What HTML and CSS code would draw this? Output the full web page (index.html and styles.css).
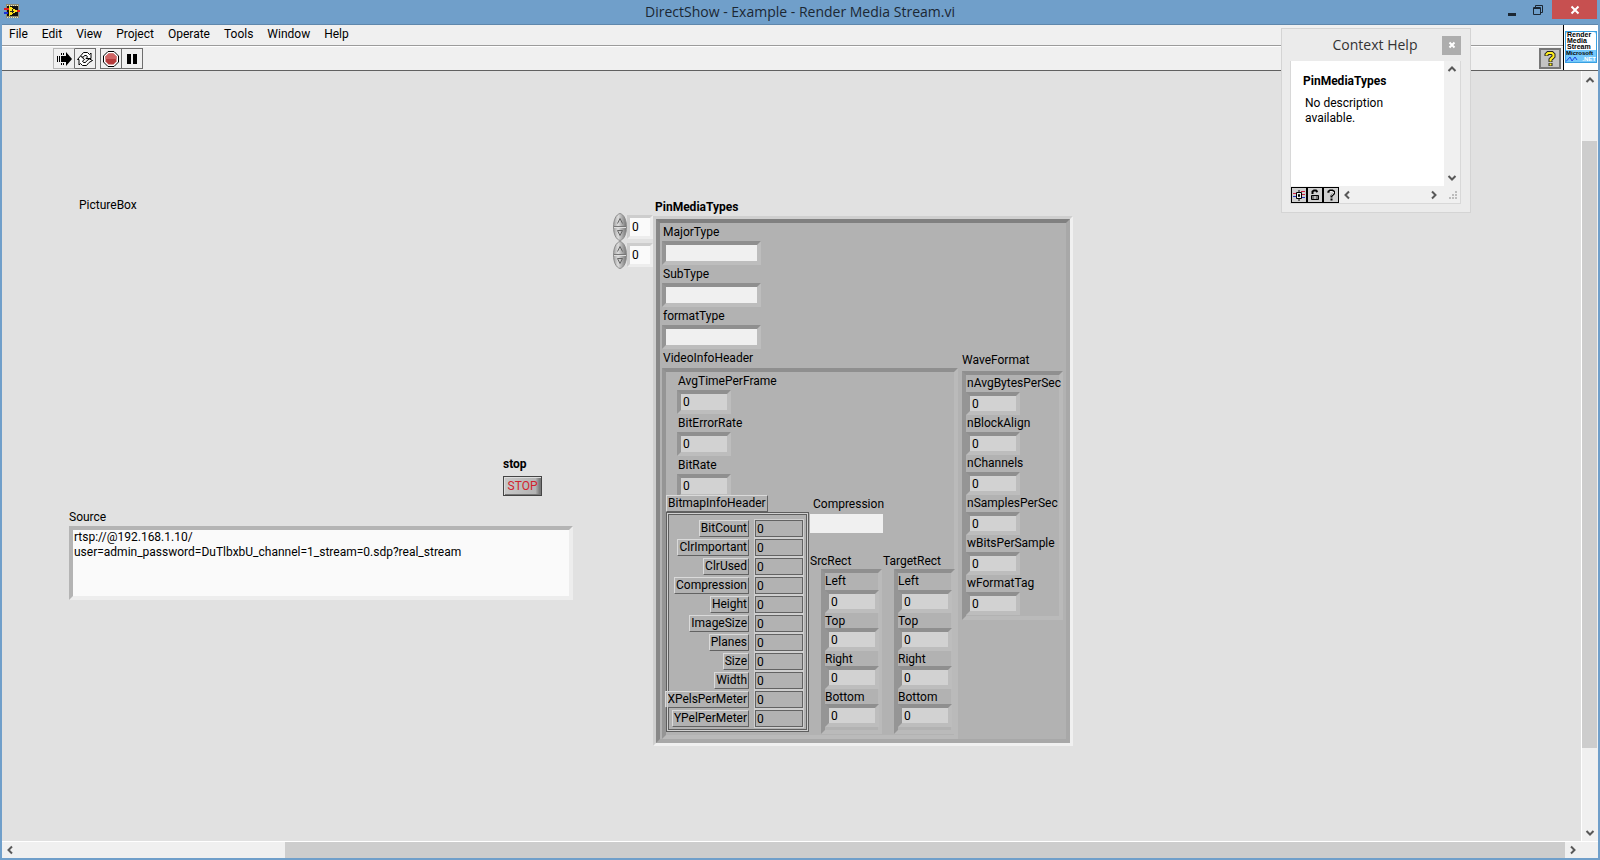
FILE: index.html
```html
<!DOCTYPE html>
<html lang="en">
<head>
<meta charset="utf-8">
<title>DirectShow - Example - Render Media Stream.vi</title>
<link rel="stylesheet" href="styles.css">
</head>
<body>
<div class="window">
  <header class="titlebar">
    <svg class="app-icon" viewBox="0 0 16 16" width="16" height="16" shape-rendering="crispEdges">
      <rect x="2" y="1" width="13" height="14" fill="#8d8a70"/>
      <path d="M3 2h11M3 14h11" stroke="#e8e4c0" stroke-dasharray="1 1"/>
      <rect x="3" y="3" width="11" height="10" fill="#111"/>
      <path d="M5 3l9 5-9 5z" fill="#ffe11c"/>
      <path d="M6 8h4M8 6v4" stroke="#222"/>
      <path d="M0 6h5M13 8h3" stroke="#e02020" stroke-width="2"/>
      <path d="M0 10h4" stroke="#1c30d8" stroke-width="2"/>
    </svg>
    <h1 class="title">DirectShow - Example - Render Media Stream.vi</h1>
    <div class="caption-buttons">
      <button class="caption" aria-label="Minimize"><svg viewBox="0 0 12 12" width="12" height="12"><path d="M2 10.500h8" stroke="#1b2733" stroke-width="3"/></svg></button>
      <button class="caption" aria-label="Restore"><svg viewBox="0 0 12 12" width="12" height="12"><path d="M3.5 3V1.5h7v7H9" fill="none" stroke="#1b2733"/><path d="M1.5 3.5h7v7h-7zM1 4.500h8" fill="none" stroke="#1b2733"/></svg></button>
      <button class="caption close" aria-label="Close"><svg viewBox="0 0 10 10" width="10" height="10"><path d="M1.500 1.500l7 7M8.500 1.500l-7 7" stroke="#fff" stroke-width="2"/></svg></button>
    </div>
  </header>

  <div class="client">
    <div class="bars">
      <div class="bar-rows">
        <nav class="menubar">
          <button>File</button><button>Edit</button><button>View</button><button>Project</button><button>Operate</button><button>Tools</button><button>Window</button><button>Help</button>
        </nav>
        <div class="toolbar">
          <div class="tool-group">
            <button class="tool soft" aria-label="Run"><svg viewBox="0 0 16 14" width="16" height="14"><path d="M6 4h4V0l6 7-6 7v-4H6z" fill="#000"/><path d="M1.500 4v6M3.500 4v6M5.500 4v6M5.500 1v2M7.500 1v2M5.500 11v2M7.500 11v2" stroke="#000"/></svg></button>
            <button class="tool" aria-label="Run continuously"><svg viewBox="0 0 16 14" width="16" height="14"><path d="M4 3.500L6.500.5h4l2 2L14 1v5.500H9L10.500 5l-1-1.500h-2L6 5.500zM12 10.500l-2.500 3h-4l-2-2L2 13V7.500h-1.500L3.500 4l4 3.500L5.500 9l1 1.500h2L10 8.500l2.500-1.500 3 1.500z" fill="#fff" stroke="#000"/></svg></button>
          </div>
          <div class="tool-group">
            <button class="tool" aria-label="Abort"><svg viewBox="0 0 16 16" width="16" height="16"><path d="M5 .5h6L15.500 5v6L11 15.500H5L.5 11V5z" fill="#fff" stroke="#000"/><path d="M5.500 2.500h5l3 3v5l-3 3h-5l-3-3v-5z" fill="#b53a3a"/><path d="M5.500 2.500h5l3 3V8h-11V5.500z" fill="#cf6464"/></svg></button>
            <button class="tool" aria-label="Pause"><svg viewBox="0 0 10 10" width="10" height="10"><path d="M0 0h4v10H0zM6 0h4v10H6z" fill="#000"/></svg></button>
          </div>
          <button class="tool help" aria-label="Context help"><svg viewBox="0 0 12 16" width="12" height="16"><path d="M2.500 5V3.500L4 2h4l1.500 1.500v2L6.500 8.500V11M6.500 12v3" fill="none" stroke="#222" stroke-width="4"/><path d="M2.500 4.500V3.500L4 2h4l1.500 1.500v2L6.500 8.500V10.500M6.500 12.500v2" fill="none" stroke="#ffee20" stroke-width="2"/></svg></button>
        </div>
      </div>
      <div class="vi-icon">
        <div class="vi-face">
          <div class="vi-text">Render<br>Media<br>Stream</div>
          <div class="vi-brand">Microsoft</div>
          <div class="vi-net"><svg viewBox="0 0 12 6" width="12" height="6"><path d="M0 5.500L4 1l2 4 3-4 2 3" fill="none" stroke="#2040e0"/></svg><span>.NET</span></div>
        </div>
      </div>
    </div>

    <main class="work">
      <div class="panel">
        <span class="item picturebox">PictureBox</span>

        <div class="item stop-control">
          <label class="bold" for="stop">stop</label>
          <button id="stop" class="stop-button">STOP</button>
        </div>

        <div class="item source">
          <label for="source">Source</label>
          <textarea id="source" spellcheck="false">rtsp://@192.168.1.10/
user=admin_password=DuTlbxbU_channel=1_stream=0.sdp?real_stream</textarea>
        </div>

        <div class="item array">
          <div class="array-index">
            <div class="index">
              <svg viewBox="0 0 14 28" width="14" height="28"><use href="#spin"/></svg>
              <input aria-label="Row index" value="0">
            </div>
            <div class="index">
              <svg viewBox="0 0 14 28" width="14" height="28"><use href="#spin"/></svg>
              <input aria-label="Column index" value="0">
            </div>
          </div>
          <div class="array-main">
            <span class="bold array-label">PinMediaTypes</span>
            <div class="array-frame"><div class="cluster">
              <div class="left">
                <div class="field wide"><label for="major">MajorType</label><input id="major"></div>
                <div class="field wide"><label for="sub">SubType</label><input id="sub"></div>
                <div class="field wide"><label for="format">formatType</label><input id="format"></div>
                <span class="video-label">VideoInfoHeader</span>
                <div class="bevel video">
                  <div class="rates">
                    <div class="field"><label for="avg">AvgTimePerFrame</label><input id="avg" value="0"></div>
                    <div class="field"><label for="err">BitErrorRate</label><input id="err" value="0"></div>
                    <div class="field"><label for="rate">BitRate</label><input id="rate" value="0"></div>
                  </div>
                  <div class="lower">
                    <div class="bitmap">
                      <span class="tag">BitmapInfoHeader</span>
                      <div class="bitmap-grid">
                        <label class="tag" for="b1">BitCount</label><input id="b1" value="0">
                        <label class="tag" for="b2">ClrImportant</label><input id="b2" value="0">
                        <label class="tag" for="b3">ClrUsed</label><input id="b3" value="0">
                        <label class="tag" for="b4">Compression</label><input id="b4" value="0">
                        <label class="tag" for="b5">Height</label><input id="b5" value="0">
                        <label class="tag" for="b6">ImageSize</label><input id="b6" value="0">
                        <label class="tag" for="b7">Planes</label><input id="b7" value="0">
                        <label class="tag" for="b8">Size</label><input id="b8" value="0">
                        <label class="tag" for="b9">Width</label><input id="b9" value="0">
                        <label class="tag" for="b10">XPelsPerMeter</label><input id="b10" value="0">
                        <label class="tag" for="b11">YPelPerMeter</label><input id="b11" value="0">
                      </div>
                    </div>
                    <div class="right">
                      <div class="compression"><label for="comp">Compression</label><input id="comp"></div>
                      <div class="rects">
                        <div class="rect">
                          <span>SrcRect</span>
                          <div class="bevel">
                            <div class="field"><label for="s1">Left</label><input id="s1" value="0"></div>
                            <div class="field"><label for="s2">Top</label><input id="s2" value="0"></div>
                            <div class="field"><label for="s3">Right</label><input id="s3" value="0"></div>
                            <div class="field"><label for="s4">Bottom</label><input id="s4" value="0"></div>
                          </div>
                        </div>
                        <div class="rect">
                          <span>TargetRect</span>
                          <div class="bevel">
                            <div class="field"><label for="t1">Left</label><input id="t1" value="0"></div>
                            <div class="field"><label for="t2">Top</label><input id="t2" value="0"></div>
                            <div class="field"><label for="t3">Right</label><input id="t3" value="0"></div>
                            <div class="field"><label for="t4">Bottom</label><input id="t4" value="0"></div>
                          </div>
                        </div>
                      </div>
                    </div>
                  </div>
                </div>
              </div>
              <div class="wave">
                <span>WaveFormat</span>
                <div class="bevel">
                  <div class="field"><label for="w1">nAvgBytesPerSec</label><input id="w1" value="0"></div>
                  <div class="field"><label for="w2">nBlockAlign</label><input id="w2" value="0"></div>
                  <div class="field"><label for="w3">nChannels</label><input id="w3" value="0"></div>
                  <div class="field"><label for="w4">nSamplesPerSec</label><input id="w4" value="0"></div>
                  <div class="field"><label for="w5">wBitsPerSample</label><input id="w5" value="0"></div>
                  <div class="field"><label for="w6">wFormatTag</label><input id="w6" value="0"></div>
                </div>
              </div>
            </div></div>
          </div>
        </div>
      </div>

      <div class="vscroll">
        <button class="arrow" aria-label="Scroll up"><svg viewBox="0 0 10 10" width="10" height="10"><path d="M1.500 7L5 3.500 8.500 7" class="chev"/></svg></button>
        <div class="track"><div class="thumb"></div></div>
        <button class="arrow" aria-label="Scroll down"><svg viewBox="0 0 10 10" width="10" height="10"><path d="M1.500 3L5 6.500 8.500 3" class="chev"/></svg></button>
      </div>
    </main>

    <div class="hscroll">
      <button class="arrow" aria-label="Scroll left"><svg viewBox="0 0 10 10" width="10" height="10"><path d="M7 1.500L3.500 5 7 8.500" class="chev"/></svg></button>
      <div class="track"><div class="thumb"></div></div>
      <button class="arrow" aria-label="Scroll right"><svg viewBox="0 0 10 10" width="10" height="10"><path d="M3 1.500L6.500 5 3 8.500" class="chev"/></svg></button>
    </div>
  </div>

  <aside class="context-help">
    <header>
      <h2>Context Help</h2>
      <button aria-label="Close help"><svg viewBox="0 0 8 8" width="8" height="8"><path d="M1.500 1.500l5 5M6.500 1.500l-5 5" stroke="#fff" stroke-width="2"/></svg></button>
    </header>
    <div class="help-body">
      <div class="help-view">
        <div class="help-text"><strong>PinMediaTypes</strong><p>No description available.</p></div>
        <div class="help-v">
          <button class="arrow" aria-label="Up"><svg viewBox="0 0 10 10" width="10" height="10"><path d="M1.500 7L5 3.500 8.500 7" class="chev"/></svg></button>
          <button class="arrow" aria-label="Down"><svg viewBox="0 0 10 10" width="10" height="10"><path d="M1.500 3L5 6.500 8.500 3" class="chev"/></svg></button>
        </div>
      </div>
      <div class="help-bottom">
        <button class="mini" aria-label="Show optional terminals"><svg viewBox="0 0 12 12" width="12" height="12"><path d="M0 4.500h3M8 2.500h4M9 5.500h3" stroke="#d02040"/><path d="M0 7.500h3M9 8.500h3" stroke="#2030c0"/><path d="M3.500 3.500h5v6h-5z" fill="#eee" stroke="#000"/><path d="M6 1v2M6 10v2M5.500 5.500h1v2h-1z" fill="none" stroke="#000"/></svg></button>
        <button class="mini" aria-label="Lock"><svg viewBox="0 0 12 12" width="12" height="12"><path d="M3.500 5V2.500L5 1.500h2L8.500 3" fill="none" stroke="#000" stroke-width="2"/><path d="M2.500 6.500h7v4h-7z" fill="#777" stroke="#000"/><path d="M6 7v3" stroke="#fff"/></svg></button>
        <button class="mini" aria-label="More help"><svg viewBox="0 0 12 12" width="12" height="12"><path d="M3.500 4V2.500L5 1.500h2.500L9 2.500V4.500L6.500 7v1.500M6.500 9.500v2" fill="none" stroke="#000" stroke-width="2"/><path d="M4 3.500L5 2.500h2.500L8.500 3v1L6.500 6.500" fill="none" stroke="#eee"/></svg></button>
        <button class="arrow" aria-label="Left"><svg viewBox="0 0 10 10" width="10" height="10"><path d="M7 1.500L3.500 5 7 8.500" class="chev"/></svg></button>
        <span class="gap"></span>
        <button class="arrow" aria-label="Right"><svg viewBox="0 0 10 10" width="10" height="10"><path d="M3 1.500L6.500 5 3 8.500" class="chev"/></svg></button>
        <svg class="grip" viewBox="0 0 8 8" width="8" height="8"><path d="M6 0h2v2H6zM3 3h2v2H3zM6 3h2v2H6zM0 6h2v2H0zM3 6h2v2H3zM6 6h2v2H6z" fill="#bdbdbd"/></svg>
      </div>
    </div>
  </aside>
</div>

<svg class="defs" width="0" height="0" aria-hidden="true">
  <defs>
    <linearGradient id="metal"><stop offset="0" stop-color="#a0a0a0"/><stop offset=".35" stop-color="#dcdcdc"/><stop offset="1" stop-color="#757575"/></linearGradient>
    <g id="spin">
      <path d="M7 .5C11 1.500 13.500 7 13.500 14S11 26.500 7 27.500C3 26.500.5 21 .5 14S3 1.500 7 .5z" fill="url(#metal)" stroke="#8c8c8c"/>
      <path d="M1 13.500h12" stroke="#777"/><path d="M1 14.500h12" stroke="#ddd"/>
      <path d="M4.500 10.500L7 5.500l2.500 5M4.500 17.500h5L7 22.500z" fill="none" stroke="#666"/>
    </g>
  </defs>
</svg>
</body>
</html>
```
FILE: styles.css
```css
* { box-sizing: border-box; }
body {
  margin: 0;
  font: 12px/18px Roboto, "Open Sans", sans-serif;
  color: #000;
}
button, input, textarea {
  margin: 0;
  padding: 0;
  border: 0;
  border-radius: 0;
  background: none;
  font: inherit;
  color: inherit;
  outline: 0;
}
button { display: flex; align-items: center; justify-content: center; }
svg { display: block; flex: none; }
label, span { white-space: nowrap; }
.bold { font-weight: 700; }
.defs { position: absolute; }
.chev { fill: none; stroke: #585858; stroke-width: 2; }

.window {
  position: relative;
  display: flex;
  flex-direction: column;
  height: 100vh;
  padding: 0 2px 2px;
  background: #709fca;
  overflow: hidden;
}
.titlebar {
  display: grid;
  grid-template-columns: 1fr auto 1fr;
  height: 25px;
  flex: none;
  border-bottom: 1px solid #5f87ac;
}
.app-icon { margin: 3px 2px; }
.title, .context-help h2 { margin: 0; font: 400 14px/24px "Open Sans", sans-serif; color: #1b2733; }
.caption-buttons { display: flex; justify-content: flex-end; }
.caption { width: 26px; height: 19px; }
.caption.close { width: 45px; margin-left: 1px; margin-right: 1px; background: #c75050; }

.client { display: flex; flex-direction: column; flex: 1; min-height: 0; background: #e1e1e1; }
.bars { display: flex; flex: none; height: 46px; background: #f0f0f0; border-bottom: 1px solid #606060; }
.bar-rows { flex: 1; }
.menubar { display: flex; gap: 14px; height: 21px; padding: 0 7px; border-bottom: 1px solid #9b9b9b; }
.menubar button { height: 18px; }
.toolbar { display: flex; align-items: flex-start; gap: 4px; padding: 1px 2px 0 51px; border-top: 1px solid #fff; }
.tool-group { display: flex; }
.tool { width: 22px; height: 21px; border: 1px solid #6e6e6e; }
.tool + .tool { width: 21px; border-left-width: 0; }
.tool.soft { border-color: #b8b8b8 #6e6e6e #b8b8b8 #b8b8b8; }
.tool.help { margin-left: auto; border: 2px solid #777; background: #c3c3c3; }
.vi-icon { width: 35px; padding: 6px 1px 0; border-left: 1px solid #000; background: #fff; }
.vi-face { height: 32px; overflow: hidden; border: 1px solid #3aa0e0; background: #74c8fb; }
.vi-text { height: 18px; padding-left: 1px; border-radius: 3px 3px 0 0; background: #fff; font: 700 7px/6px "Liberation Sans", sans-serif; }
.vi-brand { font: 700 6px/6px "Liberation Sans", sans-serif; }
.vi-net { display: flex; font: 700 6px/6px "Liberation Sans", sans-serif; color: #fff; justify-content: space-between; }

.work { display: flex; flex: 1; min-height: 0; }
.panel { position: relative; flex: 1; overflow: hidden; border-right: 1px solid #fff; }
.arrow { width: 16px; height: 16px; flex: none; }
.vscroll { display: flex; flex-direction: column; width: 16px; padding-top: 1px; background: #f0f0f0; }
.track { position: relative; display: flex; flex: 1; min-height: 0; }
.vscroll .track { flex-direction: column; padding-right: 1px; }
.vscroll .track::before { content: ""; flex: 53; }
.vscroll .thumb { flex: 607; background: #cdcdcd; }
.vscroll .track::after { content: ""; flex: 77; }
.hscroll { display: flex; flex: none; height: 17px; padding: 0 17px 0 0; border-top: 1px solid #fff; background: #f0f0f0; }
.hscroll .track::before { content: ""; flex: 267; }
.hscroll .thumb { flex: 1279; background: #cdcdcd; }

/* Controls placed freely on the front panel */
.item { position: absolute; }
.picturebox { left: 77px; top: 125px; }
.stop-control { left: 501px; top: 384px; }
.stop-control label { display: block; }
.stop-button {
  width: 39px; height: 20px; margin-top: 3px;
  border: 1px solid #444;
  background: linear-gradient(90deg, #c8c8c8, #b4b4b4 85%, #666);
  box-shadow: inset 1px 1px #ddd, inset -1px -1px #777;
  color: #d2222d;
}
.source { left: 67px; top: 437px; width: 504px; }
.source label, .source textarea { display: block; }
.source textarea {
  width: 100%; height: 74px; padding: 0 1px; resize: none; overflow: hidden;
  border: 4px solid; border-color: #b4b4b4 #ededed #ededed #b4b4b4;
  background: #fafafa; line-height: 15px;
}

.array { left: 611px; top: 127px; display: flex; }
.array-index { padding-top: 15px; }
.index { display: flex; align-items: center; height: 28px; }
.index input {
  width: 26px; height: 24px; padding-left: 2px;
  border: 3px solid; border-color: #cdcdcd #ededed #ededed #cdcdcd;
  background: #fafafa;
}
.array-label { display: block; padding-left: 2px; }
.array-frame { border: 3px solid; border-color: #cfcfcf #f0f0f0 #f0f0f0 #cfcfcf; }
.cluster {
  display: flex; gap: 4px;
  border: 4px solid; border-color: #808080 #a8a8a8 #a8a8a8 #888;
  background: #b2b2b2;
}
.left { padding-left: 2px; }
.field label { display: block; height: 18px; padding-left: 1px; }
.field input {
  display: block; width: 54px; height: 24px; padding-left: 2px;
  border: 4px solid; border-color: #8f8f8f #bdbdbd #bdbdbd #959595;
  background: #d2d2d2;
}
.field.wide input { width: 99px; background: #f0f0f0; }
.video-label { display: block; height: 19px; padding-left: 1px; }
.bevel { border: 4px solid; border-color: #8f8f8f #bababa #bababa #959595; background: #b2b2b2; }
.video { width: 296px; padding-bottom: 1px; }
.rates { height: 123px; padding-left: 11px; }
.lower { display: flex; }
.bitmap { display: flex; flex-direction: column; align-items: flex-start; width: 144px; }
.tag {
  height: 17px; padding: 0 1px;
  border: 1px solid; border-color: #dadada #626262 #626262 #dadada;
  background: #b2b2b2; line-height: 15px;
}
.bitmap-grid {
  display: grid; grid-template-columns: minmax(0, 1fr) 50px; grid-auto-rows: 19px; column-gap: 5px;
  align-items: center; justify-items: end;
  width: 143px; height: 220px; padding: 4px 2px 3px;
  border: 3px double #5e5e5e;
  outline: 1px solid #d0d0d0; outline-offset: -2px;
}
.bitmap-grid input {
  width: 50px; height: 19px; padding-left: 2px;
  border: 1px solid #cfcfcf;
  box-shadow: inset 0 0 0 1px #626262;
}
.compression label { display: block; padding-left: 3px; height: 19px; }
.compression input { display: block; width: 73px; height: 19px; background: #f0f0f0; }
.rects { display: flex; gap: 12px; padding-top: 19px; }
.rect { width: 61px; }
.rect span { display: block; height: 17px; }
.rect .bevel { width: 61px; height: 165px; margin-left: 11px; }
.rect .field label { height: 15px; padding-left: 0; line-height: 16px; }
.rect .field input { height: 23px; }
.rect .field:first-child label { height: 17px; line-height: 17px; }
.wave { padding: 128px 3px 0 0; }
.wave span { display: block; height: 20px; }
.wave .bevel { width: 101px; height: 249px; }
.wave .field label { height: 17px; line-height: 17px; }
.wave .field input { height: 23px; }

.context-help {
  position: absolute; right: 129px; top: 28px; width: 190px;
  padding: 0 9px 8px 8px; border: 1px solid #d4d4d4; background: #ebebeb;
}
.context-help header { display: grid; grid-template-columns: 1fr auto; align-items: center; height: 32px; }
.context-help h2 { padding-left: 18px; text-align: center; color: #333; }
.context-help header button { width: 19px; height: 19px; background: #adadad; }
.help-body { border: 1px solid #d8d8d8; border-top: 0; background: #f0f0f0; }
.help-view { display: flex; height: 125px; }
.help-text { flex: 1; padding: 11px 12px; background: #fff; }
.help-text strong { display: block; }
.help-text p { width: 100px; margin: 6px 0 0; padding-left: 2px; line-height: 15px; }
.help-v { display: flex; flex-direction: column; justify-content: space-between; }
.help-bottom { display: flex; align-items: center; height: 17px; }
.mini { width: 16px; height: 16px; border: 1px solid #000; background: #d0d0d0; }
.gap { flex: 1; }
.grip { margin: 0 3px 0 7px; }
```
